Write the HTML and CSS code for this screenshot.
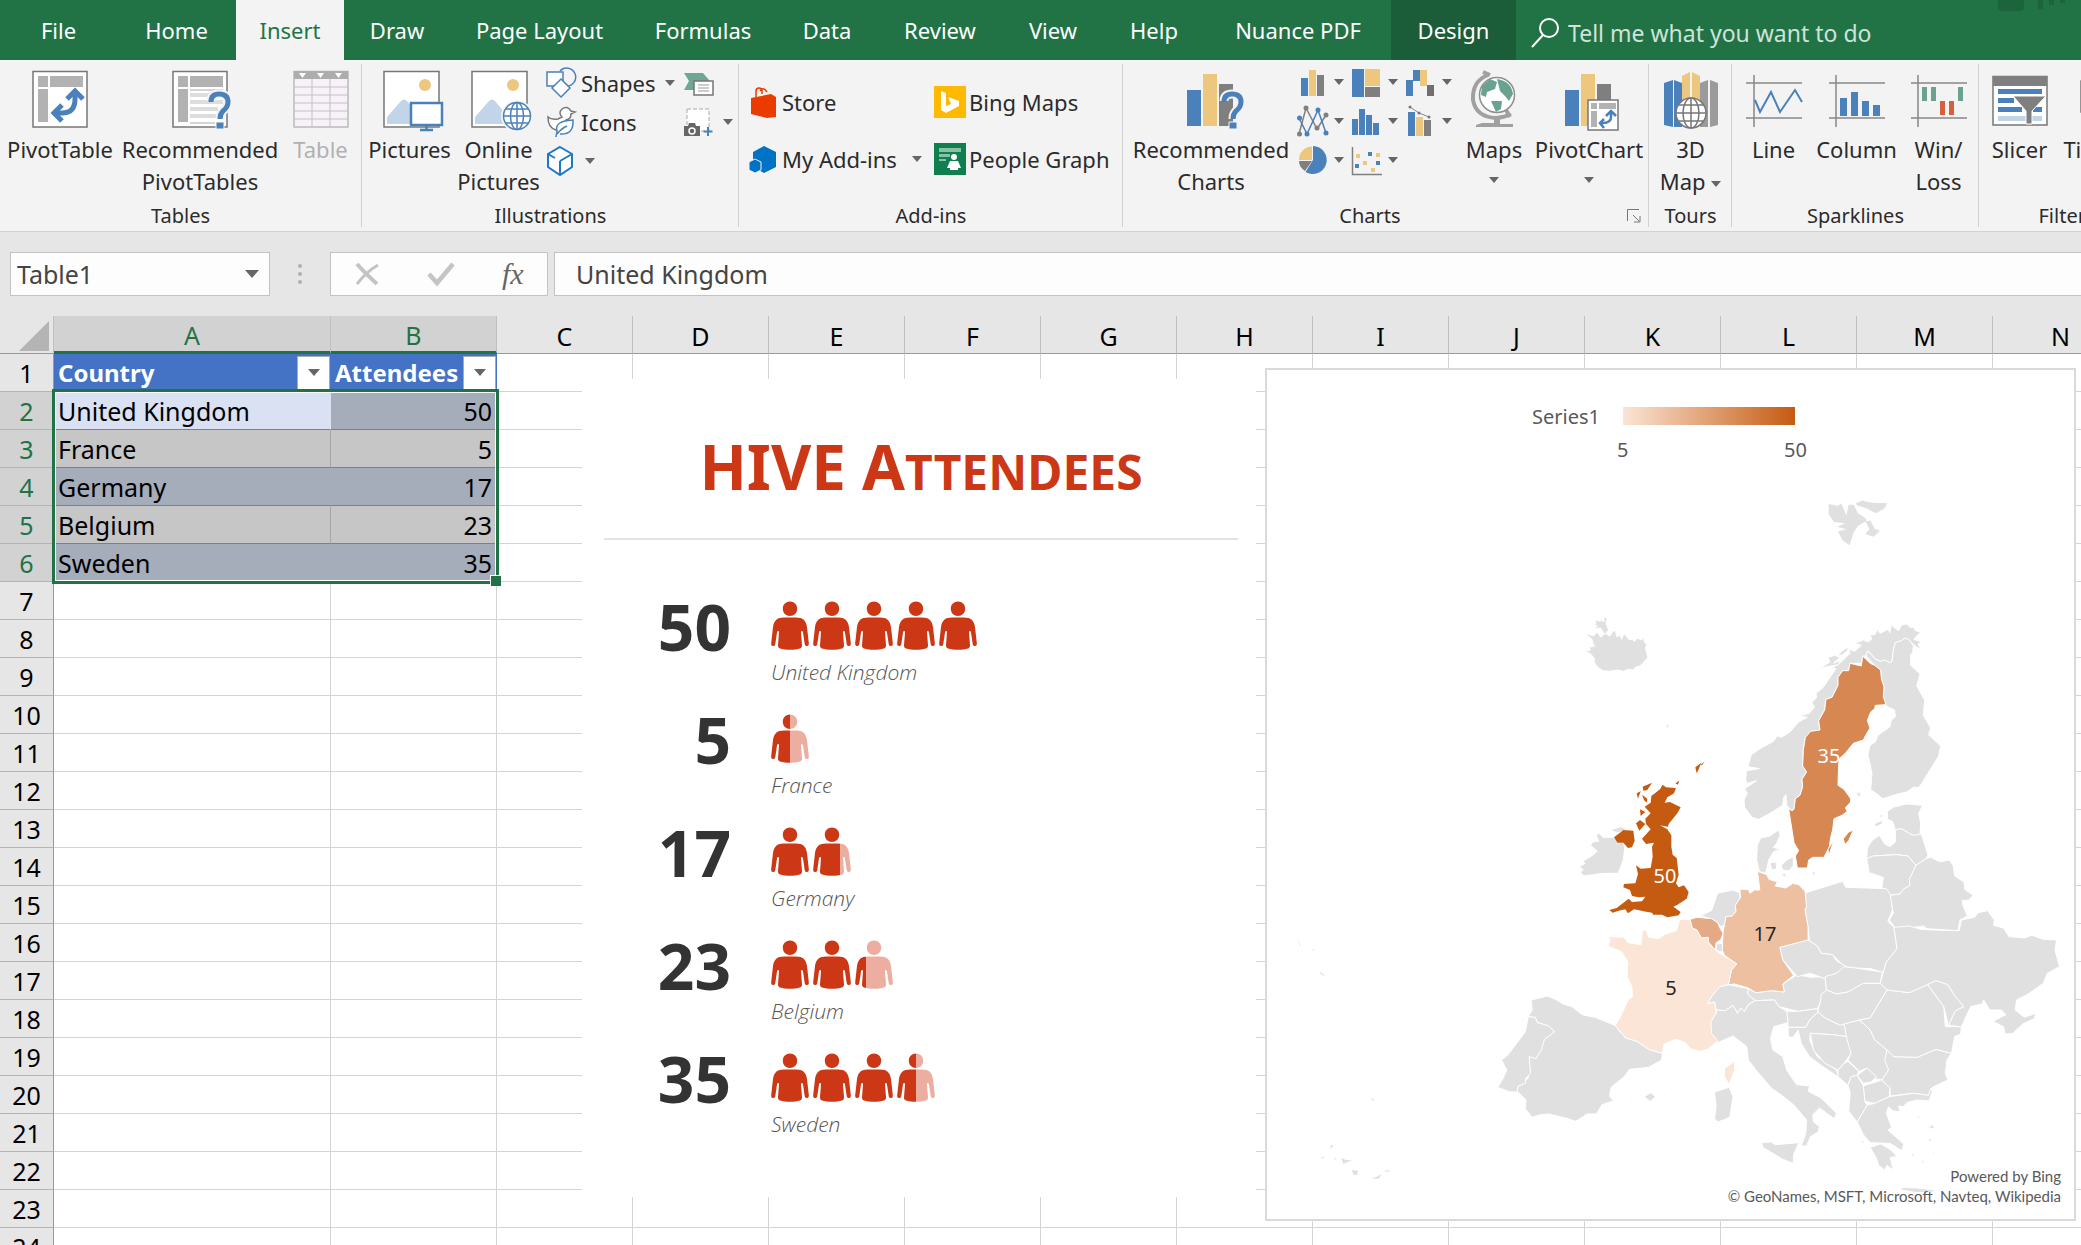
FILE: index.html
```html
<!DOCTYPE html>
<html lang="en">
<head>
<meta charset="utf-8">
<title>HIVE Attendees - Excel</title>
<link rel="stylesheet" href="styles.css">
</head>
<body>
<svg class="defs" aria-hidden="true">
  <defs>
    <linearGradient id="part30"><stop offset=".3" stop-color="#cc3816"/><stop offset=".3" stop-color="#ebaea1"/></linearGradient>
    <linearGradient id="part50"><stop offset=".5" stop-color="#cc3816"/><stop offset=".5" stop-color="#ebaea1"/></linearGradient>
    <linearGradient id="part70"><stop offset=".7" stop-color="#cc3816"/><stop offset=".7" stop-color="#ebaea1"/></linearGradient>
    <path id="person" d="M0 0M38 49M19 0.5C23 .5 26.200 3.500 26.200 7.800C26.200 12 23 15 19 15S11.800 12 11.800 7.800C11.800 3.500 15 .5 19 .5ZM13 16.500H25C32 16.500 35 19.500 36 26L37.800 42C38 44 37.500 45 36 45C34.500 45 34 44.500 33.700 43L32 31.500C31.500 29.500 30 29.500 30 31.500L31 44C31.200 46 30.500 47 29 47.500C24 49.200 14 49.200 9 47.500C7.500 47 6.800 46 7 44L8 31.500C8 29.500 6.500 29.500 6 31.500L4.300 43C4 44.500 3.500 45 2 45C.5 45 0 44 .2 42L2 26C3 19.500 6 16.500 13 16.500Z"/>
    <g id="pivot-arrow" fill="none" stroke="#4a81bb" stroke-width="5"><path d="M45 32V36Q45 50 32 50H27"/><path d="M37 36L45 28L53 36M32 42L24 50L32 58" /></g>
    <g id="question"><path d="M41 38Q41 31 49 31Q58 31 58 39Q58 44 53 48Q50 51 50 56" fill="none" stroke="#f3f3f3" stroke-width="9"/><path d="M41 39Q41 31 49 31Q58 31 58 39Q58 44 53 48Q50 51 50 56" fill="none" stroke="#4a81bb" stroke-width="5"/><path d="M46 59h8v7h-8z" fill="#4a81bb" stroke="#f3f3f3"/></g>
  </defs>
</svg>

<nav class="tabs">
  <button>File</button><button>Home</button><button class="active">Insert</button><button>Draw</button><button>Page Layout</button><button>Formulas</button><button>Data</button><button>Review</button><button>View</button><button>Help</button><button>Nuance PDF</button><button class="context">Design</button>
  <label class="tell"><svg width="30" height="30" viewBox="0 0 30 30" fill="none" stroke="#fff" stroke-width="2"><circle cx="19" cy="10" r="9"/><path d="M13 17L2 29"/></svg><input aria-label="Tell me" placeholder="Tell me what you want to do"></label>
  <svg class="circuit" width="110" height="12" viewBox="0 0 110 12" fill="#1c653c"><path d="M27 0H53V8Q53 11 49 11H31Q27 11 27 8ZM67 0h5v9h-5zM78 0h5v5h-5zM89 0h5v3h-5z"/></svg>
</nav>

<section class="ribbon">
  <div class="group">
    <div class="tools">
      <button class="big w120"><svg width="60" height="68" viewBox="0 0 60 68"><path d="M3 8.500H57V64H3Z" fill="#fff" stroke="#777" stroke-width="1.500"/><path d="M8 13h10v11H8zM20 13h33v11H20zM8 26h10v33H8z" fill="#b2b2b2"/><use href="#pivot-arrow"/></svg><span>PivotTable</span></button>
      <button class="big w160"><svg width="60" height="68" viewBox="0 0 60 68"><path d="M3 8.500H57V64H3Z" fill="#fff" stroke="#777" stroke-width="1.500"/><path d="M8 13h10v11H8zM20 13h33v11H20zM8 26h10v33H8z" fill="#b2b2b2"/><path d="M20 30h33v4H20zM20 37h33v4H20zM20 44h28v4H20zM20 51h26v4H20z" fill="#ddd"/><path d="M20 27h33M20 60h25" stroke="#aaa"/><use href="#question"/></svg><span>Recommended<br>PivotTables</span></button>
      <button class="big w80" disabled><svg width="60" height="68" viewBox="0 0 60 68"><path d="M3 8.500H57V64H3Z" fill="#f7f2f8" stroke="#bbb" stroke-width="1.500"/><path d="M3 8h54v8H3z" fill="#aeacae"/><path d="M8 10h7l-3.500 5zM26 10h7l-3.500 5zM44 10h7l-3.500 5z" fill="#fff"/><path d="M21 16V64M39 16V64M3 24H57M3 32H57M3 40H57M3 48H57M3 56H57" stroke="#c4c0c4" fill="none"/></svg><span>Table</span></button>
    </div>
    <h2>Tables</h2>
  </div>
  <div class="group">
    <div class="tools">
      <button class="big w95"><svg width="60" height="68" viewBox="-3 0 60 68"><path d="M1 8.500H56V64H1Z" fill="#fff" stroke="#777" stroke-width="1.500"/><circle cx="42" cy="22" r="6" fill="#eec77e"/><path d="M4 61V54L18 38Q21 35 24 38L34 50V61Z" fill="#c1d4e8"/><path d="M28 40H59V62H28Z" fill="#fff" stroke="#4a81bb" stroke-width="2.500"/><path d="M43.500 62v4M37 67h13" stroke="#4a81bb" stroke-width="2.500"/></svg><span>Pictures</span></button>
      <button class="big w83"><svg width="60" height="68" viewBox="-2 0 60 68"><path d="M1 8.500H56V64H1Z" fill="#fff" stroke="#777" stroke-width="1.500"/><circle cx="42" cy="22" r="6" fill="#eec77e"/><path d="M4 61V54L18 38Q21 35 24 38L34 50V61Z" fill="#c1d4e8"/><circle cx="46" cy="53" r="14.500" fill="#fff" stroke="#f3f3f3" stroke-width="3"/><g fill="none" stroke="#4a81bb" stroke-width="1.500"><circle cx="46" cy="53" r="13.500"/><ellipse cx="46" cy="53" rx="6.500" ry="13.500"/><path d="M46 39V67M32 53H60M35 46H57M35 60H57"/></g></svg><span>Online<br>Pictures</span></button>
      <div class="stack shapes">
        <button class="small"><svg width="30" height="32" viewBox="0 0 30 32" fill="none" stroke="#4a81bb" stroke-width="1.500"><path d="M14 4A9 9 0 1 1 20 19"/><path d="M1 5H17V19H1Z" fill="#fff"/><path d="M15 12L24 21L15 30L6 21Z" fill="#fff"/></svg><span>Shapes</span><i class="caret"></i></button>
        <button class="small"><svg width="30" height="32" viewBox="0 0 30 32" fill="#fff" stroke-width="1.500"><path d="M2 11Q2 22 10 24Q18 22 20 14Q25 13 25 8L29 6L25 5Q21 -1 16 3Q12 7 16 11L12 13Q5 14 2 11Z" stroke="#777"/><path d="M10 31L11 25Q8 15 27 14Q28 29 14 28M11 28Q16 22 21 20" stroke="#4a81bb"/></svg><span>Icons</span></button>
        <button class="small cube"><svg width="30" height="32" viewBox="0 0 30 32" fill="#fff" stroke="#1e77c8" stroke-width="2"><path d="M14 2L26 9V22L14 30L2 22V9ZM14 30V16M2 9L9 13M26 9L14 16"/></svg><i class="caret"></i></button>
      </div>
      <div class="stack">
        <button class="small"><svg width="30" height="28" viewBox="0 0 30 28"><path d="M0 4H19L25 11L19 21H0L5 12Z" fill="#6fa797"/><path d="M10 12H29V26H10Z" fill="#fff" stroke="#777" stroke-width="1.500"/><path d="M14 16h11M14 19h11M14 22h11" stroke="#999"/></svg></button>
        <button class="small"><svg width="30" height="30" viewBox="0 0 30 30"><path d="M3 2H25V24H3Z" fill="#fff" stroke="#aaa" stroke-dasharray="4 2"/><path d="M0 19H4L5 16H11L12 19H16V29H0Z" fill="#666"/><circle cx="8" cy="24" r="3" fill="none" stroke="#fff" stroke-width="1.500"/><path d="M24 20V29M19.500 24.500H28.500" stroke="#4a81bb" stroke-width="2"/></svg><i class="caret"></i></button>
      </div>
    </div>
    <h2>Illustrations</h2>
  </div>
  <div class="group">
    <div class="tools addins">
      <button class="small"><svg width="32" height="32" viewBox="0 0 32 32"><path d="M4 12L24 8L29 11V31L20 32L4 28Z" fill="#eb3c00"/><path d="M9 11V5Q9 2 12 2T15 5V8M13 5Q16 0 20 6" fill="none" stroke="#eb3c00" stroke-width="1.500"/></svg><span>Store</span></button>
      <button class="small"><svg width="32" height="32" viewBox="0 0 32 32"><path d="M0 0H32V32H0Z" fill="#ffb900"/><path d="M7 5L12 7V20L17 18L14 11L25 15V20L12 27L7 24Z" fill="#fff"/></svg><span>Bing Maps</span></button>
      <button class="small"><svg width="32" height="32" viewBox="0 0 32 32"><path d="M17 3L29 9V24L17 30L6 24V9Z" fill="#0072c6"/><path d="M8 16L14 19V27L8 30L2 27V19Z" fill="#0072c6" stroke="#f3f3f3"/></svg><span>My Add-ins</span><i class="caret"></i></button>
      <button class="small"><svg width="32" height="32" viewBox="0 0 32 32"><path d="M0 0H32V32H0Z" fill="#0f7f50"/><path d="M5 5H27V9H5ZM5 11H16V14H5ZM5 16H12V18H5Z" fill="#87bfa7"/><circle cx="20" cy="14" r="3" fill="#fff"/><path d="M16 18H24L27 25H24V27H16V25H13Z" fill="#fff"/></svg><span>People Graph</span></button>
    </div>
    <h2>Add-ins</h2>
  </div>
  <div class="group chart-group">
    <div class="tools charts">
      <button class="big w160"><svg width="60" height="68" viewBox="-2 0 60 68"><path d="M4 27h14v36H4z" fill="#4a81bb"/><path d="M20 11h14v52H20z" fill="#eec77e"/><path d="M36 21h14v42H36z" fill="#7f7f7f"/><use href="#question"/></svg><span>Recommended<br>Charts</span></button>
      <div class="minis">
        <button class="mini"><svg width="32" height="32" viewBox="0 0 32 32"><path d="M4 12h7v18H4z" fill="#4a81bb"/><path d="M12 4h7v26h-7z" fill="#eec77e"/><path d="M20 9h7v21h-7z" fill="#7f7f7f"/></svg><i class="caret"></i></button>
        <button class="mini"><svg width="32" height="32" viewBox="0 0 32 32"><path d="M1 3h12v28H1z" fill="#4a81bb"/><path d="M14 3h15v17H14z" fill="#eec77e"/><path d="M14 21h15v10H14z" fill="#7f7f7f"/></svg><i class="caret"></i></button>
        <button class="mini"><svg width="32" height="32" viewBox="0 0 32 32"><path d="M1 14h7v16H1zM8 4h7v11H8z" fill="#4a81bb"/><path d="M15 4h7v16h-7z" fill="#eec77e"/><path d="M22 19h7v11h-7z" fill="#6f6f6f"/></svg><i class="caret"></i></button>
        <button class="mini"><svg width="32" height="32" viewBox="0 0 32 32" fill="none" stroke-width="1.500"><path d="M2 29L9 3L20 24L29 10" stroke="#7f7f7f"/><path d="M2 13L10 29L21 5L29 28" stroke="#4a81bb"/><g stroke="none" fill="#7f7f7f"><circle cx="2.500" cy="29" r="2.500"/><circle cx="9" cy="3" r="2.500"/><circle cx="20" cy="23" r="2.500"/><circle cx="29" cy="10" r="2.500"/></g><g stroke="none" fill="#4a81bb"><circle cx="2.500" cy="13" r="2.500"/><circle cx="10" cy="29" r="2.500"/><circle cx="21" cy="5" r="2.500"/><circle cx="29" cy="28" r="2.500"/></g></svg><i class="caret"></i></button>
        <button class="mini"><svg width="32" height="32" viewBox="0 0 32 32" fill="#4a81bb"><path d="M1 14h6v16H1zM8 4h6v26H8zM15 10h6v20h-6zM22 18h6v12h-6z"/></svg><i class="caret"></i></button>
        <button class="mini"><svg width="32" height="32" viewBox="0 0 32 32"><path d="M3 7h7v24H3z" fill="#4a81bb"/><path d="M11 12h7v19h-7z" fill="#eec77e"/><path d="M19 15h7v16h-7z" fill="#7f7f7f"/><path d="M5 2L14 8L24 12" stroke="#888" fill="none"/><circle cx="5" cy="2" r="1.500" fill="#777"/><circle cx="14" cy="8" r="1.500" fill="#777"/><circle cx="24" cy="12" r="1.500" fill="#777"/></svg><i class="caret"></i></button>
        <button class="mini"><svg width="32" height="32" viewBox="0 0 32 32"><path d="M16 2A14 14 0 1 1 8.500 28L16 16Z" fill="#4a81bb"/><path d="M15 16H2A13 13 0 0 1 15 2.500Z" fill="#eec77e"/><path d="M15 17L8 27Q2 23 2 17Z" fill="#7f7f7f"/></svg><i class="caret"></i></button>
        <button class="mini"><svg width="32" height="32" viewBox="0 0 32 32"><path d="M1.500 3V30.500H31" stroke="#7f7f7f" fill="none" stroke-width="1.500"/><path d="M5 10h4v4H5zM12 17h4v4h-4zM20 24h4v4h-4zM25 9h4v4h-4z" fill="#eec77e"/><path d="M4 20h4v4H4zM17 8h4v4h-4zM25 17h4v4h-4z" fill="#4a81bb"/></svg><i class="caret"></i></button>
      </div>
      <button class="big w80"><svg width="60" height="68" viewBox="0 0 60 68"><path d="M24 12Q8 18 9 37Q12 54 32 55Q44 54 46 50M19 9l7 3M42 47l4 7" fill="none" stroke="#a0a0a0" stroke-width="4"/><circle cx="33" cy="32" r="17.500" fill="#fff" stroke="#8f8f8f" stroke-width="1.500"/><path d="M18 23L26 16L33 19L31 26L23 29L22 34L17 32ZM33 16Q47 18 49 31L45 38L41 33L36 28ZM27 38H38L37 46L32 49Z" fill="#69a38f"/><path d="M30 55h6v6h13v3H12v-2l6-2h12z" fill="#a0a0a0"/></svg><span>Maps</span><i class="caret"></i></button>
      <button class="big w110"><svg width="60" height="68" viewBox="0 0 60 68"><path d="M6 27h14v36H6z" fill="#4a81bb"/><path d="M22 11h14v52H22z" fill="#eec77e"/><path d="M38 21h14v16H38z" fill="#7f7f7f"/><path d="M29 37H59V67H29Z" fill="#fff" stroke="#777" stroke-width="1.500"/><path d="M32 40h6v6h-6zM40 40h17v6H40zM32 48h6v16h-6z" fill="#b2b2b2"/><path d="M52 49V54Q52 60 44 60H42M47 53L52 48L57 53M45 56L41 60L45 65" fill="none" stroke="#4a81bb" stroke-width="2.500"/></svg><span>PivotChart</span><i class="caret"></i></button>
    </div>
    <h2>Charts</h2>
    <button class="launcher" aria-label="Charts options"><svg width="14" height="14" viewBox="0 0 14 14" fill="none" stroke="#777"><path d="M.5 12V.5H12M6 6L12 12M13 7V13H7"/></svg></button>
  </div>
  <div class="group">
    <div class="tools">
      <button class="big w82"><svg width="60" height="68" viewBox="0 0 60 68"><path d="M3 20L12 17V64L3 62ZM13 17L21 20V64H13Z" fill="#4a81bb"/><path d="M21 13L29 9V50H21ZM31 9L39 13V50H31Z" fill="#eec77e"/><path d="M39 20L47 17V64H39ZM49 17L57 20V62L49 64Z" fill="#9b9b9b"/><circle cx="30" cy="50" r="15" fill="#fff" stroke="#777" stroke-width="1.500"/><path d="M30 35V65M15 50H45M18 42H42M18 58H42" stroke="#777" stroke-width="1.500"/><ellipse cx="30" cy="50" rx="8" ry="15" fill="none" stroke="#777" stroke-width="1.500"/></svg><span>3D<br>Map <i class="caret"></i></span></button>
    </div>
    <h2>Tours</h2>
  </div>
  <div class="group">
    <div class="tools">
      <button class="big w82"><svg width="60" height="68" viewBox="0 0 60 68" fill="none"><path d="M10 12V64M2 20H58M2 55H58" stroke="#888" stroke-width="1.500"/><path d="M11 37L16 49L27 29L36 49L51 27L58 39" stroke="#4a81bb" stroke-width="2"/></svg><span>Line</span></button>
      <button class="big w82"><svg width="60" height="68" viewBox="0 0 60 68"><path d="M9 12V64M2 20H58M2 55H58" stroke="#888" stroke-width="1.500"/><path d="M13 35h7v18h-7zM24 29h7v24h-7zM35 38h7v15h-7zM46 42h7v11h-7z" fill="#4a81bb"/></svg><span>Column</span></button>
      <button class="big w80"><svg width="60" height="68" viewBox="0 0 60 68"><path d="M9 12V64M2 20H58M2 55H58" stroke="#888" stroke-width="1.500"/><path d="M13 24h5v14h-5zM22 24h5v14h-5zM49 24h5v14h-5z" fill="#69a38f"/><path d="M31 38h5v14h-5zM40 38h5v14h-5z" fill="#d65f3f"/></svg><span>Win/<br>Loss</span></button>
    </div>
    <h2>Sparklines</h2>
  </div>
  <div class="group">
    <div class="tools">
      <button class="big w80"><svg width="60" height="68" viewBox="0 0 60 68"><path d="M3 13.500H57V62H3Z" fill="#fff" stroke="#777" stroke-width="1.500"/><path d="M3 13h54v10H3z" fill="#7f7f7f"/><path d="M8 26h44v5H8zM8 35h16v5H8zM8 44h24v5H8zM43 44h9v5h-9z" fill="#4a81bb"/><path d="M8 53h44v5H8z" fill="#c1d4e8"/><path d="M23 33H56L42 48V61H36V48Z" fill="#7f7f7f" stroke="#fff"/></svg><span>Slicer</span></button>
      <button class="big w95"><svg width="60" height="68" viewBox="0 0 60 68"><path d="M3 18H57V49H3Z" fill="#fff" stroke="#777" stroke-width="1.500"/><path d="M3 18h54v9H3z" fill="#7f7f7f"/></svg><span>Timeline</span></button>
    </div>
    <h2>Filters</h2>
  </div>
</section>

<section class="formula-bar">
  <div class="name-box"><input aria-label="Name box" value="Table1"><i class="caret large"></i></div>
  <span class="dots"></span>
  <div class="entry">
    <button aria-label="Cancel"><svg width="26" height="24" viewBox="0 0 26 24" fill="none" stroke="#c4c4c4"><path d="M3 2Q10 10 23 22" stroke-width="4"/><path d="M24 3Q12 10 3 22" stroke-width="3"/></svg></button>
    <button aria-label="Enter"><svg width="28" height="24" viewBox="0 0 28 24" fill="none" stroke="#c4c4c4"><path d="M2 12L10 21L26 2" stroke-width="4.500"/></svg></button>
    <button class="fx">fx</button>
  </div>
  <input class="formula" aria-label="Formula bar" value="United Kingdom">
</section>

<main class="sheet">
  <table class="grid">
    <colgroup><col class="c-head"><col class="c-a"><col class="c-b"><col span="12" class="c-n"></colgroup>
    <thead><tr id="letters"></tr></thead>
    <tbody id="rows"></tbody>
  </table>
  <div class="selection"></div>

  <article class="people">
    <h1>HIVE A<span>ttendees</span></h1>
    <hr>
    <dl id="people"></dl>
  </article>

  <figure class="map">
    <svg viewBox="1267 370 807 849" aria-hidden="true">
      <g class="land" transform="translate(1560 600) scale(.33333)">
        <path d="M72 98L100 108L112 96L122 112L135 100L150 108L158 95L166 90L170 110L180 106L185 118L192 100L206 118L216 118L224 124L232 114L244 120L250 112L254 128L262 132L256 142L260 160L264 172L248 190L240 198L228 200L220 210L205 208L190 214L172 210L150 214L128 212L112 200L102 186L104 176L92 162L70 150L90 152L88 142L104 138L98 128L96 118Z"/>
        <path d="M88 68L108 72L104 60L122 64L118 54L132 66L132 48L142 56L138 70L146 90L134 104L122 84L102 86L112 78Z"/>
        <path d="M1040 72L1050 82L1062 82L1066 92L1082 96L1070 108L1062 118L1086 126L1074 132L1084 150L1060 134L1050 122L1036 114L1024 122L1006 128L1000 150L996 184L990 188L972 180L962 184L944 176L930 158L922 154L918 168L908 168L904 190L870 190L866 212L848 212L834 232L834 256L816 292L798 298L794 330L776 362L780 390L752 394L736 412L730 450L728 498L740 516L726 538L728 560L720 586L706 596L702 628L696 632L680 616L678 584L672 590L668 616L630 640L596 658L576 652L554 622L552 600L562 580L554 566L590 542L560 550L557 536L560 512L598 506L564 500L574 464L600 446L640 424L652 408L664 412L690 396L716 366L742 352L716 348L748 340L764 320L755 308L770 292L768 280L790 262L810 232L828 206L812 206L840 190L870 160L868 148L884 154L904 136L884 130L910 120L925 126L935 118L930 104L945 104L952 88L960 100L984 88L990 98L994 74L1004 84L1016 92L1026 74Z"/>
        <path d="M776 208L810 186L804 172L824 166L840 172L820 190L840 182L836 194L800 200ZM834 166L850 150L866 140L862 152L846 166Z"/>
        <path d="M1036 114L1050 122L1060 138L1058 158L1052 164L1052 196L1080 222L1070 258L1094 300L1090 346L1112 384L1106 404L1142 438L1136 468L1084 552L1076 562L1060 562L1040 576L1006 584L968 596L946 578L932 570L936 520L924 464L930 436L946 426L954 406L990 380L994 360L1006 350L1004 330L978 318L970 290L972 260L964 236L962 210L944 196L918 168L922 154L930 158L944 176L962 184L972 180L990 188L996 184L1000 150L1006 128L1024 122Z"/>
        <path d="M890 576L902 578L900 590L892 588Z"/>
        <path d="M982 634L1000 622L1040 612L1088 616L1076 640L1082 668L1080 706L1058 706L1024 686L1006 690L998 664L982 658ZM942 672L968 660L966 672L948 680ZM956 646L968 644L966 654Z"/>
        <path d="M1006 690L1024 686L1058 706L1084 702L1104 764L1098 776L1068 796L1044 768L1010 764L940 768L920 776L922 744L936 722L958 706L974 732L990 740L1006 726Z"/>
        <path d="M920 776L940 768L1010 764L1044 768L1068 796L1048 838L1050 856L1030 868L1020 882L990 886L966 862L970 832L928 818Z"/>
        <path d="M1068 796L1098 776L1112 772L1140 786L1168 780L1180 798L1184 828L1212 846L1214 868L1240 886L1226 900L1206 902L1210 920L1222 948L1200 960L1194 992L1100 986L1090 978L1010 990L988 960L1000 940L990 886L1020 882L1030 868L1050 856L1048 838Z"/>
        <path d="M108 704L118 700L130 712L152 712L162 712L172 728L190 728L194 744L190 780L174 820L128 820L72 828L60 816L70 810L58 800L76 790L68 784L98 766L112 754L92 736L98 726L116 724ZM152 690L182 680L200 686L180 698L164 696Z"/>
        <path d="M656 690L660 706L650 730L640 742L660 748L640 756L626 780L622 800L616 820L598 814L590 780L592 736L602 714L630 708L650 694ZM630 788L648 786L650 806L636 810ZM664 796L680 780L700 770L700 796L688 812L668 810ZM660 824L676 820L680 832ZM756 814L768 818L760 828Z"/>
        <path d="M318 376L328 372L320 392Z"/>
        <g fill="#d78752"><path d="M908 168L930 190L944 196L962 210L964 236L972 260L970 290L978 314L946 316L944 326L932 336L922 362L930 384L916 408L910 420L880 430L856 460L840 474L836 490L834 556L852 568L872 596L872 606L856 624L862 634L846 646L822 656L818 690L812 712L808 740L792 772L758 772L746 780L742 804L712 804L706 768L716 752L702 728L686 626L696 632L702 628L706 596L720 586L728 560L726 538L740 516L728 498L730 450L736 412L752 394L780 390L776 362L794 330L798 298L816 292L834 256L834 232L848 212L866 212L870 190L904 198Z"/><path d="M866 696L880 690L866 722L854 734L850 716ZM822 720L806 768L804 748Z"/></g>
        <g class="uk" fill="#c55a11"><path d="M308 554L318 562L348 564L342 580L322 592L314 608L330 606L362 622L352 640L326 672L324 680L300 676L322 688L334 706L334 740L338 764L350 774L354 806L356 824L348 850L356 862L372 856L386 876L380 896L350 916L340 920L362 936L356 946L322 952L306 944L280 944L276 938L250 934L234 930L222 928L204 940L196 928L176 932L158 938L148 930L170 924L206 896L216 906L246 904L256 890L236 892L216 888L210 870L190 862L192 852L226 850L234 822L228 796L242 806L272 804L278 770L276 740L282 728L258 732L246 716L272 688L258 672L256 656L272 640L254 620L272 608L274 588L300 568Z"/><path d="M162 712L180 698L190 690L220 692L224 722L216 742L204 744L190 728L172 728ZM248 560L276 548L262 570L250 572ZM230 580L242 574L234 596ZM246 584L262 596L260 608L252 600ZM240 628L256 636L242 648ZM228 670L240 660L256 672L238 692ZM406 502L424 488L416 508L410 520ZM422 494L434 484L426 496ZM346 550L358 542L354 554Z"/></g>
      </g>
      <g class="land" transform="translate(1480 840) scale(.3833 .33333)">
        <path d="M850 158L946 124L954 142L1060 146L1070 162L1076 210L1064 244L1080 262L1088 326L1060 366L1052 398L1020 386L980 384L950 380L920 344L890 340L880 318L860 304L856 262L848 210Z"/>
        <path d="M576 226L604 212L620 160L660 150L678 158L678 182L666 196L668 214L658 228L642 230L638 256L626 260L620 248L600 236Z"/>
        <path d="M616 312L632 310L634 336L616 332Z"/>
        <path d="M612 756L650 742L660 770L652 830L640 838L620 846L612 836L616 800Z"/>
        <path d="M134 480L176 468L200 480L216 492L240 500L266 524L300 532L352 556L380 594L410 604L440 628L476 640L474 660L440 682L390 688L376 710L342 742L338 768L348 782L318 794L304 822L280 822L250 844L230 836L180 822L158 824L136 832L118 806L120 780L96 752L100 738L126 714L128 650L150 650L168 598L194 576L180 558L150 548L144 532L126 530L136 510Z"/>
        <path d="M126 530L144 532L150 548L180 558L194 576L168 598L160 630L146 656L128 650L132 700L120 714L118 730L100 738L96 756L78 756L46 742L60 716L70 690L56 660L72 646L118 576Z"/>
        <path d="M428 770L446 758L458 770L444 784ZM384 788L394 782L396 786ZM476 762L484 764L488 772Z"/>
        <path d="M594 490L606 466L626 440L648 434L700 446L698 462L718 482L700 494L690 514L680 504L672 520L660 496L640 512L616 510L612 486Z"/>
        <path d="M698 462L700 446L720 458L760 452L794 456L790 432L828 404L862 412L900 410L904 450L888 486L880 506L830 514L780 500L768 480L718 482Z"/>
        <path d="M782 322L820 310L856 300L880 318L890 340L920 344L930 362L956 380L930 400L900 416L862 400L828 410L790 360Z"/>
        <path d="M900 410L930 400L950 380L980 384L1050 396L1044 430L1000 430L960 456L930 462L904 450Z"/>
        <path d="M904 450L930 462L960 456L1000 430L1044 430L1062 450L1018 534L990 540L940 556L900 534L880 516L888 486L890 464Z"/>
        <path d="M800 514L830 514L880 506L882 516L860 540L850 562L804 562Z"/>
        <path d="M804 562L850 562L860 540L882 516L900 534L940 556L950 552L960 590L920 584L862 580L860 600L880 650L930 690L936 712L890 676L860 650L838 610L830 570L816 592L804 590Z"/>
        <path d="M862 580L920 584L960 590L968 640L950 670L934 690L900 670L870 630Z"/>
        <path d="M950 552L990 540L1018 570L1030 600L1062 630L1060 660L1066 690L1050 720L1030 716L1010 684L990 694L960 660L968 640L958 600Z"/>
        <path d="M950 670L960 664L988 694L984 706L968 710L960 736L934 710L934 690Z"/>
        <path d="M1010 684L1034 710L1020 726L1000 730L984 706Z"/>
        <path d="M1000 738L1048 720L1070 744L1068 770L1030 790L1004 784Z"/>
        <path d="M968 710L984 706L1000 738L1004 784L1010 796L984 846L962 814L966 760L960 736Z"/>
        <path d="M1062 630L1080 650L1140 652L1190 628L1230 640L1218 660L1214 700L1220 720L1180 742L1170 766L1130 760L1070 768L1070 744L1048 720L1066 690L1056 660Z"/>
        <path d="M1062 450L1120 458L1168 434L1210 500L1214 560L1256 560L1254 582L1238 590L1230 640L1190 628L1140 652L1080 650L1062 630L1030 600L1018 570L990 540L1018 534Z"/>
        <path d="M1080 262L1120 258L1150 268L1180 270L1250 272L1256 240L1290 232L1300 218L1324 212L1342 240L1340 256L1366 264L1380 290L1420 294L1440 286L1470 298L1504 300L1500 330L1512 380L1480 400L1470 430L1430 462L1400 480L1396 510L1420 532L1450 520L1446 536L1416 552L1390 580L1370 582L1366 560L1338 544L1372 524L1360 510L1330 510L1314 480L1310 492L1280 500L1256 560L1222 556L1240 512L1262 500L1240 470L1220 434L1190 422L1168 434L1120 458L1062 450L1044 430L1052 398L1060 366L1088 326Z"/>
        <path d="M1168 434L1190 422L1220 434L1240 470L1262 500L1240 512L1222 556L1210 500Z"/>
        <path d="M616 510L640 512L660 496L672 520L680 504L690 514L700 494L718 482L768 480L780 500L800 514L804 548L766 560L758 596L764 630L790 650L800 690L826 734L860 738L856 754L890 774L930 820L924 836L886 804L868 824L870 846L886 860L882 876L862 890L852 918L838 918L850 880L852 840L820 796L790 768L760 744L720 690L700 660L696 620L660 588L620 608L604 580L602 546L616 520Z"/>
        <path d="M734 908L760 906L770 914L832 908L818 944L818 970L790 958L738 922Z"/>
        <path d="M984 846L1010 796L1030 790L1068 770L1130 760L1170 766L1176 744L1180 754L1172 782L1140 780L1114 788L1104 800L1092 798L1096 816L1076 812L1066 800L1060 820L1074 862L1064 870L1084 890L1106 912L1100 932L1070 910L1018 908L1000 884ZM1018 922L1046 912L1072 930L1088 950L1070 952L1078 990L1062 976L1056 990L1040 976L1034 954Z"/>
        <path d="M1098 1042L1140 1044L1188 1050L1180 1056L1140 1058L1100 1050ZM1168 862L1180 854L1188 868ZM1170 894L1178 898L1172 908ZM1112 832L1118 838L1112 840ZM1142 826L1148 832L1142 836ZM1126 940L1134 946L1126 950ZM1180 936L1186 938L1182 944ZM1150 960L1162 966L1154 970ZM1198 928L1206 932L1198 932ZM996 900L1002 908L996 912ZM1240 990L1250 992L1240 1004Z"/>
        <path fill="#edc0a2" d="M724 94L748 104L754 118L776 126L770 138L798 144L816 130L832 134L848 154L852 200L848 210L856 262L856 300L782 322L790 360L818 406L790 432L794 456L760 452L720 458L700 444L664 432L648 434L656 390L670 372L638 346L632 330L634 276L642 230L658 228L668 214L666 196L680 172L678 148L700 148L704 160L716 150L730 150Z"/>
        <path fill="#fbe5d6" d="M522 238L548 238L554 264L566 270L578 294L596 292L596 306L616 332L636 348L670 372L656 390L648 434L626 440L606 466L594 490L612 486L616 520L602 546L604 580L620 602L594 628L572 634L550 626L536 608L512 598L480 612L476 640L440 628L410 604L380 594L352 556L366 532L386 480L398 470L396 440L384 410L386 366L370 336L334 318L340 300L334 290L376 292L386 308L420 314L424 270L434 272L440 292L466 296L484 282L512 272Z"/>
        <path fill="#fbe5d6" d="M664 660L664 690L650 734L638 710L638 684L656 672Z"/>
        <path fill="#e4aa85" d="M548 238L566 232L604 236L620 248L626 264L634 280L628 300L616 308L614 330L596 306L596 292L578 294L566 270L554 264Z"/>
      </g>
      <path class="land" transform="translate(1260 360) scale(.5236 .33333)" d="M1086 432L1104 438L1110 430L1120 466L1124 434L1134 434L1142 460L1156 474L1158 482L1142 498L1134 516L1126 556L1112 540L1104 514L1120 508L1102 500L1118 490L1096 486L1086 462ZM1138 430L1150 422L1170 428L1198 430L1192 446L1176 460L1160 446L1140 436ZM1156 484L1166 482L1174 506L1184 512L1172 530L1156 522L1164 508Z"/>
      <path class="land" transform="translate(1260 900) scale(.33333)" d="M332 592L344 600L338 602ZM212 734L220 736L212 748ZM184 770L194 772L186 776ZM222 774L230 776L224 780ZM244 774L258 780L276 780L250 792ZM276 810L294 812L292 824L280 824ZM334 836L350 830L366 822L356 836ZM372 816L382 810L392 814ZM112 118L124 138L120 136ZM156 146L164 150L160 152ZM178 212L196 228L184 224Z"/>
      <g class="labels" text-anchor="middle"><text x="1829" y="763">35</text><text x="1665" y="883">50</text><text class="dark" x="1765" y="941">17</text><text class="dark" x="1671" y="995">5</text></g>
    </svg>
    <div class="legend"><span class="series">Series1</span><div class="scale"><i></i><p><span>5</span><span>50</span></p></div></div>
    <figcaption>Powered by Bing<br>© GeoNames, MSFT, Microsoft, Navteq, Wikipedia</figcaption>
  </figure>
</main>
<script src="sheet.js"></script>
</body>
</html>
```
FILE: styles.css
```css
* { box-sizing: border-box; }
body { margin: 0; height: 100vh; display: flex; flex-direction: column; overflow: hidden; background: #e6e6e6; font: 22px/32px "Noto Sans", sans-serif; color: #2b2b2b; }
button, input { font: inherit; color: inherit; border: 0; background: none; padding: 0; margin: 0; border-radius: 0; }
svg { display: block; flex: none; overflow: visible; }
.defs { position: absolute; width: 0; height: 0; }
.caret { display: inline-block; flex: none; border: 5px solid transparent; border-top: 6px solid #666; border-bottom: 0; vertical-align: middle; }
.caret.large { border-width: 8px 7px 0; }

.tabs { position: relative; flex: none; display: grid; grid-template-columns: 117px 119px 108px 106px 179px 148px 100px 126px 100px 102px 186px 125px 1fr; height: 60px; background: #217346; color: #fff; }
.tabs button { white-space: nowrap; }
.tabs .active { background: #f3f3f3; color: #217346; }
.tabs .context { background: #1b5d39; }
.tell { display: flex; align-items: center; gap: 8px; padding: 5px 0 0 14px; }
.tell input { flex: 1; font-size: 23px; }
.tell input::placeholder { color: #cfe3d8; opacity: 1; }
.circuit { position: absolute; right: 0; top: 0; }

.ribbon { flex: none; display: flex; height: 172px; background: #f3f3f3; border-bottom: 1px solid #d2d2d2; overflow: hidden; }
.group { position: relative; flex: none; display: flex; flex-direction: column; justify-content: space-between; padding: 4px 0 3px; }
.group:first-child { padding-right: 1px; }
.group::after { content: ""; position: absolute; right: 0; top: 4px; bottom: 4px; width: 1px; background: #d2d2d2; }
.group h2 { margin: 0; font-size: 20px; font-weight: 400; line-height: 24px; text-align: center; }
.tools { display: flex; height: 138px; }
.big { display: flex; flex-direction: column; align-items: center; white-space: nowrap; line-height: 32px; }
.big svg { margin: -1px 0 2px; }
.big > .caret { margin-top: 12px; }
.big span { display: block; }
.big:disabled { color: #b1b1b1; }
.w80 { width: 81px; }
.w82 { width: 83px; }
.w83 { width: 83px; }
.w95 { width: 95px; }
.w110 { width: 110px; }
.w120 { width: 120px; }
.w160 { width: 160px; }
.stack { display: flex; flex-direction: column; margin-top: -1px; }
.stack .small { height: 39px; gap: 5px; }
.shapes { width: 140px; padding-left: 6px; }
.small { display: flex; align-items: center; gap: 3px; white-space: nowrap; }
.small .caret { margin-left: 4px; }
.stack + .stack { width: 59px; padding-left: 4px; }
.addins { display: grid; grid-template-columns: 187px 187px; grid-auto-rows: 57px; padding: 9px 0 0 8px; width: 384px; }
.addins .caret { margin-left: 12px; }
.chart-group { width: 526px; }
.chart-group h2 { padding-right: 32px; }
.charts { padding-left: 8px; }
.minis { display: grid; grid-template-columns: repeat(3, 54px); grid-auto-rows: 39px; margin-top: -2px; padding-left: 6px; }
.charts .w80 { width: 70px; }
.charts .w110 { width: 120px; }
.mini { display: flex; align-items: center; gap: 5px; }
.launcher { position: absolute; right: 8px; bottom: 8px; }

.formula-bar { flex: none; display: flex; height: 84px; padding: 20px 0 20px 10px; font-size: 25px; color: #444; }
.name-box, .entry, .formula { height: 44px; background: #fdfdfd; border: 1px solid #c3c3c3; }
.name-box { display: flex; align-items: center; width: 260px; padding: 0 10px 0 6px; }
.name-box input { flex: 1; min-width: 0; }
.dots { width: 4px; margin: 12px 28px; border-left: 4px dotted #b0b0b0; }
.entry { display: flex; align-items: center; justify-content: space-around; width: 218px; }
.fx { font: italic 30px/36px "Liberation Serif", serif; color: #666; }
.formula { flex: 1; min-width: 0; margin-left: 6px; padding-left: 21px; border-right: 0; }

.sheet { position: relative; flex: 1; overflow: hidden; }
.grid { width: 2129px; table-layout: fixed; border-collapse: separate; border-spacing: 0; background: #fff; font-size: 25px; line-height: 30px; color: #000; }
.c-head { width: 54px; }
.c-a { width: 277px; }
.c-b { width: 166px; }
.c-n { width: 136px; }
.grid th, .grid td { height: 38px; padding: 0 4px; border: solid #d4d4d4; border-width: 0 1px 1px 0; white-space: nowrap; }
.grid th { background: #e6e6e6; border-color: #b4b4b4; font-weight: 400; }
.grid thead th { padding-top: 3px; border-bottom-color: #999; border-right-color: #c0c0c0; }
.grid tbody th { border-right-color: #999; }
.grid th.picked { background: #d2d2d2; color: #217346; }
.grid thead th.picked { border-bottom: 3px solid #217346; }
.corner::after { content: ""; display: block; width: 0; margin-left: auto; border: solid transparent; border-width: 0 0 30px 30px; border-bottom-color: #b4b4b4; }
.grid td.heading { background: #4472c4; border-color: #4472c4; color: #fff; font-weight: 700; font-size: 24px; padding-right: 0; }
.heading div { display: flex; align-items: center; justify-content: space-between; }
.filter { width: 33px; height: 34px; flex: none; background: #fff; border: 1px solid #aaa; display: grid; place-items: center; }
.filter .caret { border-width: 7px 6px 0; }
.grid .data { background: #c6c6c6; border-color: #a6a6a6; border-bottom-color: #6b82ae; }
.grid .data.band { background: #a5adbb; border-right-color: #a5adbb; }
.grid .data.current { background: #dae1f3; border-right-color: #dae1f3; }
.number { text-align: right; }
.selection { position: absolute; left: 52px; top: 73px; width: 447px; height: 195px; border: 3px solid #217346; outline: 1px solid #fff; outline-offset: -4px; }
.selection::after { content: ""; position: absolute; right: -5px; bottom: -5px; width: 10px; height: 10px; background: #217346; border: solid #fff; border-width: 1px 0 0 1px; }

.people { position: absolute; left: 582px; top: 63px; width: 674px; height: 818px; padding: 51px 18px 0 22px; background: #fff; }
.people h1 { margin: 0; font: 700 62px/72px "Noto Sans", sans-serif; color: #cc3816; text-align: center; white-space: nowrap; }
.people h1 span { font-size: 48px; text-transform: uppercase; }
.people hr { margin: 30px 0 57px; border: 0; height: 2px; background: #e3e4df; }
.people dl { margin: 0; display: grid; grid-template-columns: 127px 1fr; grid-auto-rows: 113px; column-gap: 40px; }
.people dt { font: 700 64px/60px "Noto Sans", sans-serif; color: #333; text-align: right; }
.people dd { margin: 0; font: italic 300 21px/30px "Open Sans", sans-serif; color: #555; }
.figures { display: flex; gap: 4px; padding: 4px 0 7px; }

.map { position: absolute; left: 1265px; top: 52px; width: 811px; height: 853px; margin: 0; padding: 32px 13px 13px; display: flex; flex-direction: column; justify-content: space-between; background: #fff; border: 2px solid #d9d9d9; font-size: 20px; line-height: 30px; color: #595959; }
.map > svg { position: absolute; inset: 0; width: 100%; height: 100%; }
.land { fill: #e0e0e0; }
.land path { stroke: #fff; stroke-width: 1; vector-effect: non-scaling-stroke; }
.land .uk path { stroke: none; }
.labels { fill: #fff; }
.labels .dark { fill: #262626; }
.legend { position: relative; display: flex; justify-content: center; gap: 23px; padding-right: 14px; }
.scale { width: 172px; }
.scale i { display: block; height: 18px; margin: 5px 0 10px; background: linear-gradient(90deg, #fbe5d6, #c55a11); }
.scale p { display: flex; justify-content: space-between; margin: 0 -12px 0 -6px; }
.map figcaption { position: relative; font: 15px/20px Lato, sans-serif; text-align: right; }
```
FILE: sheet.js
```js
const attendees = [["United Kingdom", 50], ["France", 5], ["Germany", 17], ["Belgium", 23], ["Sweden", 35]];

const filter = '<button class="filter" aria-label="Filter"><i class="caret"></i></button>';
document.getElementById("letters").innerHTML = '<th class="corner"></th>' +
  [..."ABCDEFGHIJKLMN"].map((l, i) => `<th${i < 2 ? ' class="picked"' : ""}>${l}</th>`).join("");

let rows = "";
for (let r = 1; r <= 24; r++) {
  const entry = attendees[r - 2];
  const band = r % 2 === 0 ? " band" : "";
  rows += `<tr><th${entry ? ' class="picked"' : ""}>${r}</th>`;
  if (r === 1) rows += `<td class="heading"><div>Country${filter}</div></td><td class="heading"><div>Attendees${filter}</div></td>`;
  else if (entry) rows += `<td class="data${band}${r === 2 ? " current" : ""}">${entry[0]}</td><td class="data number${band}">${entry[1]}</td>`;
  else rows += "<td></td><td></td>";
  rows += "<td></td>".repeat(12) + "</tr>";
}
document.getElementById("rows").innerHTML = rows;

const figure = fill => `<svg width="38" height="49" viewBox="0 0 38 49"><use href="#person" fill="${fill}"/></svg>`;
document.getElementById("people").innerHTML = attendees.map(([name, n]) => {
  const rest = n % 10;
  const part = rest ? figure(`url(#part${rest * 10})`) : "";
  return `<dt>${n}</dt><dd><div class="figures">${figure("#cc3816").repeat(Math.floor(n / 10))}${part}</div>${name}</dd>`;
}).join("");
```
